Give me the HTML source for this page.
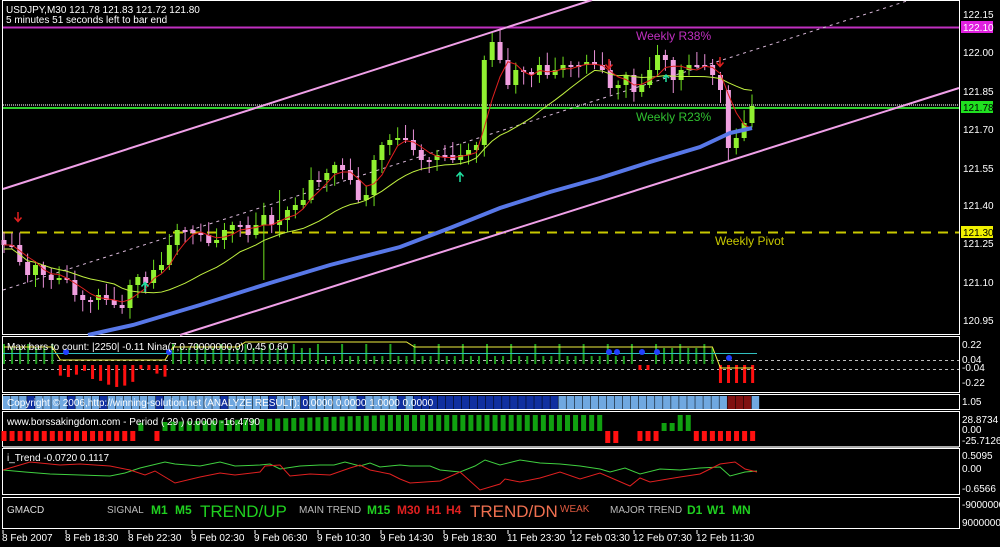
<!DOCTYPE html>
<html><head><meta charset="utf-8"><style>
html,body{margin:0;padding:0;background:#000;width:1000px;height:547px;overflow:hidden}
svg{display:block}
text{font-family:"Liberation Sans",sans-serif}
</style></head><body>
<svg id="s" width="1000" height="547" xmlns="http://www.w3.org/2000/svg">
<rect width="1000" height="547" fill="#000"/>
<rect x="2.5" y="0.5" width="957" height="334" fill="none" stroke="#fff" stroke-width="1"/>
<line x1="3" y1="27.5" x2="959" y2="27.5" stroke="#c030c0" stroke-width="2"/>
<line x1="3" y1="105" x2="959" y2="105" stroke="#888" stroke-width="2" stroke-dasharray="1,1"/>
<line x1="3" y1="108" x2="959" y2="108" stroke="#30d030" stroke-width="2"/>
<line x1="3" y1="232.5" x2="959" y2="232.5" stroke="#c8c800" stroke-width="2" stroke-dasharray="10,7"/>
<line x1="3" y1="189" x2="592" y2="0" stroke="#f0a0e8" stroke-width="2"/>
<line x1="180" y1="335" x2="959" y2="88" stroke="#f0a0e8" stroke-width="2"/>
<line x1="3" y1="290" x2="910" y2="0" stroke="#d8b8d8" stroke-width="1" stroke-dasharray="3,4"/>
<g id="cand"></g>
<polyline points="88,335 133,325 200,305 270,283 330,265 400,247 450,228 500,208 550,192 600,178 650,162 700,147 730,133 752,128" fill="none" stroke="#5878e8" stroke-width="4"/>
<text x="636" y="40" fill="#c030c0" font-size="12">Weekly R38%</text>
<text x="636" y="121" fill="#30c030" font-size="12">Weekly R23%</text>
<text x="715" y="245" fill="#c8c800" font-size="12">Weekly Pivot</text>
<text x="6" y="13" fill="#fff" font-size="10">USDJPY,M30  121.78 121.83 121.72 121.80</text>
<text x="6" y="23" fill="#fff" font-size="10">5 minutes 51 seconds left to bar end</text>
<g stroke="#e02020" stroke-width="1.5" fill="none">
<path d="M18 212 v9 M14.5 217.5 l3.5 4 l3.5 -4"/>
<path d="M609 59 v9 M605.5 64.5 l3.5 4 l3.5 -4"/>
<path d="M720 57 v9 M716.5 62.5 l3.5 4 l3.5 -4"/>
</g>
<g stroke="#20e0a0" stroke-width="1.5" fill="none">
<path d="M145 292 v-9 M141.5 286.5 l3.5 -4 l3.5 4"/>
<path d="M460 182 v-9 M456.5 176.5 l3.5 -4 l3.5 4"/>
<path d="M666 82 v-7 M663 78 l3 -3 l3 3"/>
</g>
<g fill="#fff" font-size="10">
<text x="963" y="18">122.15</text><text x="963" y="56">122.00</text><text x="963" y="95">121.85</text>
<text x="963" y="133">121.70</text><text x="963" y="172">121.55</text><text x="963" y="209">121.40</text>
<text x="963" y="247">121.25</text><text x="963" y="286">121.10</text><text x="963" y="324">120.95</text>
</g>
<rect x="961" y="21" width="32" height="12" fill="#e020e0"/><text x="963" y="31" fill="#fff" font-size="10">122.10</text>
<rect x="961" y="101" width="32" height="12" fill="#20e020"/><text x="963" y="111" fill="#000" font-size="10">121.78</text>
<rect x="961" y="226" width="32" height="12" fill="#f0f000"/><text x="963" y="236" fill="#000" font-size="10">121.30</text>

<rect x="2.5" y="336.5" width="957" height="56" fill="none" stroke="#fff"/>
<line x1="3" y1="360.5" x2="959" y2="360.5" stroke="#bbb" stroke-dasharray="3,3"/>
<line x1="3" y1="369.5" x2="959" y2="369.5" stroke="#bbb" stroke-dasharray="3,3"/>
<g id="nina"></g>
<text x="7" y="350" fill="#fff" font-size="10">Max bars to count: |2250|  -0.11  Nina(7,0.70000000,0) 0.45 0.60</text>
<g fill="#fff" font-size="10"><text x="962" y="348">0.22</text><text x="962" y="363">0.04</text><text x="962" y="371">-0.04</text><text x="962" y="386">-0.22</text></g>

<rect x="2.5" y="394.5" width="957" height="15" fill="none" stroke="#fff"/>
<g id="cbar"></g>
<text x="7" y="406" fill="#fff" font-size="10">Copyright © 2006,http://winning-solution.net (ANALYZE RESULT): 0.0000 0.0000 1.0000 0.0000</text>
<text x="962" y="405" fill="#fff" font-size="10">1.05</text>

<rect x="2.5" y="411.5" width="957" height="35" fill="none" stroke="#fff"/>
<line x1="3" y1="447" x2="959" y2="447" stroke="#aaa" stroke-width="2"/>
<g id="bor"></g>
<text x="7" y="425" fill="#fff" font-size="10">www.borssakingdom.com  -  Period ( 29 ) 0.0000 -16.4790</text>
<g fill="#fff" font-size="10"><text x="962" y="423">28.8734</text><text x="962" y="433">0.00</text><text x="962" y="444">-25.7126</text></g>

<rect x="2.5" y="448.5" width="957" height="46" fill="none" stroke="#fff"/>
<polyline fill="none" stroke="#40d040" stroke-width="1" points="3,470 25,472 50,474 80,475 110,476 125,473 140,468 165,462 175,464 200,466 220,462 235,466 260,465 270,464 280,469 300,466 320,465 334,465 345,462 360,466 370,463 380,467 400,465 410,466 430,466 440,470 460,472 475,466 485,460 500,465 520,460 540,463 560,464 580,466 600,469 610,472 625,468 640,474 660,469 680,470 700,468 720,467 730,476 745,472 757,471"/>
<polyline fill="none" stroke="#e02020" stroke-width="1" points="3,470 20,465 30,462 60,465 80,464 110,466 130,470 145,475 155,471 175,483 200,477 220,473 235,475 260,472 265,466 280,465 290,476 310,474 330,475 350,468 360,465 370,470 390,474 400,479 410,483 440,481 460,472 480,490 500,484 505,479 520,482 540,478 560,472 580,479 600,473 630,486 640,478 650,482 680,477 700,474 712,468 720,464 735,462 745,469 757,472"/>
<text x="7" y="461" fill="#fff" font-size="10">i_Trend -0.0720 0.1117</text>
<g fill="#fff" font-size="10"><text x="962" y="459">0.5095</text><text x="962" y="472">0.00</text><text x="962" y="492">-0.6566</text></g>

<rect x="2.5" y="497.5" width="957" height="31" fill="none" stroke="#fff"/>
<text x="7" y="513" fill="#ddd" font-size="10">GMACD</text>
<text x="107" y="513" fill="#bbb" font-size="10">SIGNAL</text>
<text x="151" y="514" fill="#20d020" font-size="12" font-weight="bold">M1</text>
<text x="175" y="514" fill="#20d020" font-size="12" font-weight="bold">M5</text>
<text x="200" y="517" fill="#20d020" font-size="17">TREND/UP</text>
<text x="299" y="513" fill="#bbb" font-size="10">MAIN TREND</text>
<text x="367" y="514" fill="#20d020" font-size="12" font-weight="bold">M15</text>
<text x="397" y="514" fill="#e02020" font-size="12" font-weight="bold">M30</text>
<text x="426" y="514" fill="#e02020" font-size="12" font-weight="bold">H1</text>
<text x="446" y="514" fill="#e02020" font-size="12" font-weight="bold">H4</text>
<text x="470" y="517" fill="#f07050" font-size="17">TREND/DN</text>
<text x="560" y="512" fill="#e05a40" font-size="10">WEAK</text>
<text x="610" y="513" fill="#bbb" font-size="10">MAJOR TREND</text>
<text x="687" y="514" fill="#20d020" font-size="12" font-weight="bold">D1</text>
<text x="707" y="514" fill="#20d020" font-size="12" font-weight="bold">W1</text>
<text x="732" y="514" fill="#20d020" font-size="12" font-weight="bold">MN</text>
<g fill="#fff" font-size="10"><text x="962" y="508">-9000000</text><text x="962" y="526">9000000</text></g>

<g fill="#fff" font-size="10">
<text x="2" y="541">8 Feb 2007</text><text x="65" y="541">8 Feb 18:30</text><text x="128" y="541">8 Feb 22:30</text>
<text x="191" y="541">9 Feb 02:30</text><text x="254" y="541">9 Feb 06:30</text><text x="317" y="541">9 Feb 10:30</text>
<text x="380" y="541">9 Feb 14:30</text><text x="443" y="541">9 Feb 18:30</text><text x="507" y="541">11 Feb 23:30</text>
<text x="571" y="541">12 Feb 03:30</text><text x="633" y="541">12 Feb 07:30</text><text x="696" y="541">12 Feb 11:30</text>
</g>
<g stroke="#fff"><line x1="3" y1="530" x2="3" y2="534"/><line x1="66" y1="530" x2="66" y2="534"/><line x1="129" y1="530" x2="129" y2="534"/><line x1="192" y1="530" x2="192" y2="534"/><line x1="255" y1="530" x2="255" y2="534"/><line x1="318" y1="530" x2="318" y2="534"/><line x1="381" y1="530" x2="381" y2="534"/><line x1="444" y1="530" x2="444" y2="534"/><line x1="508" y1="530" x2="508" y2="534"/><line x1="571" y1="530" x2="571" y2="534"/><line x1="634" y1="530" x2="634" y2="534"/><line x1="697" y1="530" x2="697" y2="534"/></g>
</svg>
<script>
var NS="http://www.w3.org/2000/svg";
function el(p,t,a){var e=document.createElementNS(NS,t);for(var k in a)e.setAttribute(k,a[k]);p.appendChild(e);return e;}
var C=[245,245,262,275,265,275,280,278,280,295,300,300,295,300,305,308,285,277,283,270,265,245,230,230,233,235,243,240,230,225,225,235,225,215,225,220,210,205,200,180,180,173,165,170,180,200,195,160,145,140,138,140,150,160,160,155,155,160,155,150,145,60,42,60,85,70,72,75,65,75,70,65,65,65,62,65,70,88,85,75,92,85,70,55,60,80,70,65,65,65,75,90,148,138,123,106];
var g=document.getElementById('cand');var red=[],yel=[];
var n=C.length,step=(752-4)/(n-1);
for(var i=0;i<n;i++){var x=4+i*step,o=i?C[i-1]:240,c=C[i];var r=Math.sin(i*7.3)*0.5+0.5;
var hi=Math.min(o,c)-3-r*10,lo=Math.max(o,c)+3+(1-r)*10;if(i==33){lo=280}if(i==35){hi=190}if(i==92){lo=160}
var up=c<o;el(g,'line',{x1:x,y1:hi,x2:x,y2:lo,stroke:up?'#70e020':'#e890d8','stroke-width':1});
var t=Math.min(o,c),h=Math.max(2,Math.abs(o-c));el(g,'rect',{x:x-2.5,y:t,width:5,height:h,fill:up?'#90f030':'#f0a0e0'});
var s=0,k=0;for(var j=Math.max(0,i-3);j<=i;j++){s+=C[j];k++}red.push(x+','+(s/k));
s=0;k=0;for(j=Math.max(0,i-14);j<=i;j++){s+=C[j];k++}yel.push(x+','+(s/k+4));}
el(g,'polyline',{points:yel.join(' '),fill:'none',stroke:'#c0f040','stroke-width':1});
el(g,'polyline',{points:red.join(' '),fill:'none',stroke:'#e02020','stroke-width':1});
var ng=document.getElementById('nina');var yl=[];
for(var i=0;i<94;i++){var x=4+i*8.05;var neg=(i>=7&&i<=20)||(i>=79&&i<=80)||(i>=89);
var hgt=neg?(i<21?8+Math.sin(i)*4+(i>10&&i<17?10:0):(i>=89?18:5)):(i%3==0?20:((i>=40&&i<=80)?8:16));
if(neg)el(ng,'rect',{x:x-1.5,y:365,width:3,height:hgt,fill:'#ff1010'});else el(ng,'rect',{x:x-1,y:364-hgt,width:2,height:hgt,fill:'#20a020'});
var yv=neg&&i<21?360:(i>=89?368:(i>=30&&i<=50?342:347));yl.push(x+','+yv);}
el(ng,'polyline',{points:yl.join(' '),fill:'none',stroke:'#f0f040','stroke-width':1});
el(ng,'line',{x1:3,y1:353.5,x2:757,y2:353.5,stroke:'#30c0c0','stroke-width':1});
[[66,352],[169,352],[609,352],[617,352],[642,352],[657,352],[729,358]].forEach(function(p){el(ng,'circle',{cx:p[0],cy:p[1],r:3,fill:'#2040ff'})});
var cb=document.getElementById('cbar');
for(var i=0;i<94;i++){var x=3+i*8.05;var col='#70a8e0';
if(i==3||i==8||i==12||i==19||i==27||i==33||i==37||i==44||i==49)col='#1030a0';
if(i>=51&&i<=68)col='#1030a0';
if(i>=90&&i<=92)col='#801010';
el(cb,'rect',{x:x,y:396,width:7.5,height:13,fill:col});}
var bg=document.getElementById('bor');
for(var i=0;i<94;i++){var x=4+i*8.05;var neg=i<=16||i==19||(i>=75&&i<=76)||(i>=79&&i<=81)||(i>=86);
if(i==18||(i>=77&&i<=78))continue;
if(neg)el(bg,'rect',{x:x-2.5,y:431,width:5,height:(i>=75&&i<=76)?12:10,fill:'#ff1010'});
else{var h=Math.min(16,4+i*0.25);if(i==77||i==82||i==83)h=8;el(bg,'rect',{x:x-2.5,y:431-h,width:5,height:h,fill:'#10a010'});}}
</script>
</body></html>
